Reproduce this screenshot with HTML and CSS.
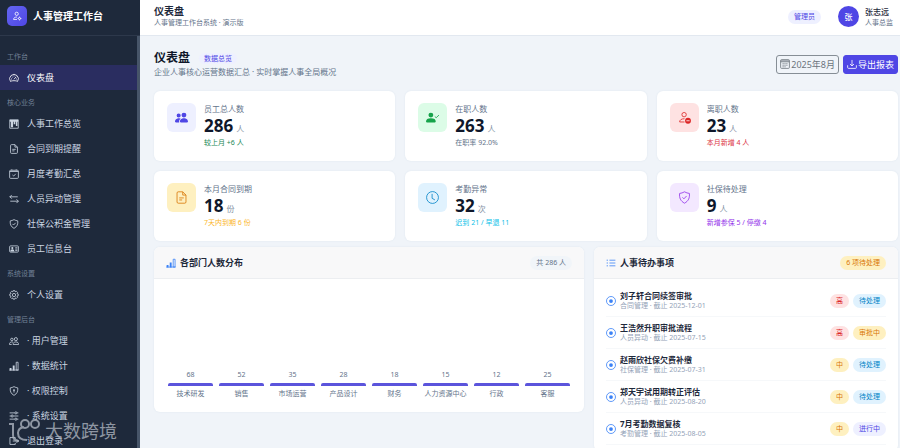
FILE: index.html
```html
<!DOCTYPE html>
<html lang="zh-CN">
<head>
<meta charset="utf-8">
<meta name="viewport" content="width=device-width, initial-scale=1">
<title>人事管理工作台</title>
<link rel="stylesheet" href="styles.css">
</head>
<body>
<svg class="sprite" aria-hidden="true">
  <symbol id="person-gear" viewBox="0 0 16 16"><circle cx="7.5" cy="4.5" r="2.6"/><path d="M8 9.600c-3.800 0-5.500 1.600-5.500 3.900h5.500"/><circle cx="12" cy="12" r="1.700"/><path d="M12 9v1.300M12 13.700V15M9 12h1.300M13.700 12H15"/></symbol>
  <symbol id="gauge" viewBox="0 0 16 16"><path d="M2.400 13.500a7 7 0 1 1 11.200 0c-1-.7-3-1.200-5.600-1.200s-4.600.5-5.600 1.200z"/><path d="M8 10l3.500-4M8 4v1.500M3.300 9.500h1.500M4.600 6l1 .8M11.500 9.500h1.300"/></symbol>
  <symbol id="board" viewBox="0 0 16 16"><path d="M1.200 1.200h13.600v13.600H1.200z"/><path class="solid" d="M1.500 1.500h13v3h-13zM3 4h3.500v9H3zM7.500 4h2.500v4.500H7.500zM11 4h2.500v7H11z"/></symbol>
  <symbol id="doc" viewBox="0 0 16 16"><path d="M9.500 1H4a1.500 1.500 0 0 0-1.500 1.500v11A1.500 1.500 0 0 0 4 15h8a1.500 1.500 0 0 0 1.500-1.500V5zM9.500 1v4h4M5.200 8.500h5.600M5.200 11h3.600"/></symbol>
  <symbol id="cal-check" viewBox="0 0 16 16"><rect x="1" y="2" width="14" height="13" rx="1.500"/><path d="M1 4h14M4.500.5V2M11.500.5V2M5.500 9.500l2 1.800 3.300-3.600"/></symbol>
  <symbol id="swap" viewBox="0 0 16 16"><path d="M15 11.500H2M12 8.500l3 3-3 3M1 4.500h13M4.500 1.500l-3 3 3 3"/></symbol>
  <symbol id="shield-check" viewBox="0 0 16 16"><path d="M8 1C6 2.200 4 2.700 2 3c-.6 5.300 1 9.300 6 12 5-2.700 6.600-6.700 6-12-2-.3-4-.8-6-2z"/><path d="M5.500 7.800l1.800 1.800 3.300-3.500"/></symbol>
  <symbol id="id-card" viewBox="0 0 16 16"><rect x="1" y="3" width="14" height="10" rx="1.500"/><circle class="solid" cx="5.300" cy="6.500" r="1.700"/><path class="solid" d="M2 12q0-3.500 3.300-3.500T8.600 12z"/><path d="M10 6h3.500M10 8.200h3.500M10 10.500h3.500"/></symbol>
  <symbol id="gear" viewBox="0 0 16 16"><path d="M6.600 1h2.800l.5 1.900 1.800-1 2 2-1 1.800 2 .6v2.900l-2 .6 1 1.800-2 2-1.800-1-.5 2H6.600l-.5-2-1.800 1-2-2 1-1.800-2-.6V6.300l2-.6-1-1.800 2-2 1.800 1z"/><circle cx="8" cy="8" r="2.600"/></symbol>
  <symbol id="people" viewBox="0 0 16 16"><circle cx="11" cy="5" r="2.500"/><path d="M6.500 13.500c0-2.400 1.500-4 4.500-4s4.500 1.600 4.500 4zM6.500 9.800C2.500 8.700.6 10.800.6 13.500h3.700"/><circle cx="4.600" cy="5.500" r="2"/></symbol>
  <symbol id="people-fill" viewBox="0 0 16 16"><path class="solid" d="M7 14s-1 0-1-1 1-4 5-4 5 3 5 4-1 1-1 1zm4-6a3 3 0 1 0 0-6 3 3 0 0 0 0 6m-5.784 6A2.240 2.240 0 0 1 5 13c0-1.355.68-2.750 1.936-3.720A6.300 6.300 0 0 0 5 9c-4 0-5 3-5 4s1 1 1 1zM4.500 8a2.500 2.500 0 1 0 0-5 2.500 2.500 0 0 0 0 5"/></symbol>
  <symbol id="bars" viewBox="0 0 16 16"><path class="solid" d="M1 11h3v4H1zM6 7h3v8H6z"/><path d="M11.500 2h3v12.500h-3zM.5 14.500h15"/></symbol>
  <symbol id="shield-lock" viewBox="0 0 16 16"><path d="M8 1C6 2.200 4 2.700 2 3c-.6 5.300 1 9.300 6 12 5-2.700 6.600-6.700 6-12-2-.3-4-.8-6-2z"/><circle class="solid" cx="8" cy="6.500" r="1.500"/><path d="M8 7v3.500"/></symbol>
  <symbol id="sliders" viewBox="0 0 16 16"><path d="M1 3h8M13 3h2M1 8h2M7 8h8M1 13h8M13 13h2"/><circle cx="11" cy="3" r="1.700"/><circle cx="5" cy="8" r="1.700"/><circle cx="11" cy="13" r="1.700"/></symbol>
  <symbol id="exit" viewBox="0 0 16 16"><path d="M10 5V2.500H1.500v11H10V11M6 8h9M12 5l3 3-3 3"/></symbol>
  <symbol id="person-check" viewBox="0 0 16 16"><circle class="solid" cx="6" cy="5" r="3"/><path class="solid" d="M0 13c0-2.500 2-4 6-4s6 1.500 6 4q0 1-1 1H1q-1 0-1-1z"/><path d="M10.800 6.700l1.700 1.600L16 5"/></symbol>
  <symbol id="person-minus" viewBox="0 0 16 16"><circle cx="7.500" cy="4.500" r="2.700"/><path d="M8 9.500c-4 0-6 1.700-6 4h6"/><circle class="solid" cx="12.300" cy="12" r="3.600"/><path class="cut" d="M10.300 12h4"/></symbol>
  <symbol id="clock" viewBox="0 0 16 16"><circle cx="8" cy="8" r="7.300"/><path d="M7.500 3.500V9l3.500 2"/></symbol>
  <symbol id="calendar" viewBox="0 0 16 16"><rect x="1" y="1" width="14" height="14" rx="1.500"/><path d="M1 4.500h14M1 3h14M4 7.500h2M7 7.500h2M10 7.500h2M4 10h2M7 10h2M10 10h2M4 12.500h2M7 12.500h2"/></symbol>
  <symbol id="download" viewBox="0 0 16 16"><path d="M1 10v3.500Q1 15 2.500 15h11q1.500 0 1.500-1.500V10M8 1.500V11M4.800 8L8 11.200 11.200 8"/></symbol>
  <symbol id="list" viewBox="0 0 16 16"><path d="M5.500 3.500H15M5.500 8H15M5.500 12.500H15M1 3.500h2.200M1 8h2.200M1 12.500h2.200"/></symbol>
  <symbol id="record" viewBox="0 0 16 16"><circle cx="8" cy="8" r="7.200"/><circle class="solid" cx="8" cy="8" r="3"/></symbol>
</svg>
<div class="app">
  <aside class="sidebar">
    <div class="brand">
      <span class="logo"><svg class="icon"><use href="#person-gear"/></svg></span>
      <span>人事管理工作台</span>
    </div>
    <nav class="nav" aria-label="主导航">
      <p class="nav-label">工作台</p>
      <a class="nav-item active" href="#"><svg class="icon"><use href="#gauge"/></svg>仪表盘</a>
      <p class="nav-label">核心业务</p>
      <a class="nav-item" href="#"><svg class="icon"><use href="#board"/></svg>人事工作总览</a>
      <a class="nav-item" href="#"><svg class="icon"><use href="#doc"/></svg>合同到期提醒</a>
      <a class="nav-item" href="#"><svg class="icon"><use href="#cal-check"/></svg>月度考勤汇总</a>
      <a class="nav-item" href="#"><svg class="icon"><use href="#swap"/></svg>人员异动管理</a>
      <a class="nav-item" href="#"><svg class="icon"><use href="#shield-check"/></svg>社保公积金管理</a>
      <a class="nav-item" href="#"><svg class="icon"><use href="#id-card"/></svg>员工信息台</a>
      <p class="nav-label">系统设置</p>
      <a class="nav-item" href="#"><svg class="icon"><use href="#gear"/></svg>个人设置</a>
      <p class="nav-label">管理后台</p>
      <a class="nav-item" href="#"><svg class="icon"><use href="#people"/></svg>· 用户管理</a>
      <a class="nav-item" href="#"><svg class="icon"><use href="#bars"/></svg>· 数据统计</a>
      <a class="nav-item" href="#"><svg class="icon"><use href="#shield-lock"/></svg>· 权限控制</a>
      <a class="nav-item" href="#"><svg class="icon"><use href="#sliders"/></svg>· 系统设置</a>
      <a class="nav-item" href="#"><svg class="icon"><use href="#exit"/></svg>退出登录</a>
    </nav>
  </aside>
  <div class="page">
    <header class="topbar">
      <div>
        <div class="topbar-title">仪表盘</div>
        <div class="topbar-sub">人事管理工作台系统 · 演示版</div>
      </div>
      <div class="account">
        <span class="badge indigo">管理员</span>
        <div class="user">
          <span class="avatar">张</span>
          <div>
            <div class="user-name">张志远</div>
            <div class="user-role">人事总监</div>
          </div>
        </div>
      </div>
    </header>
    <main class="content">
      <div class="page-head">
        <div>
          <div class="heading"><h1>仪表盘</h1><span class="badge small indigo">数据总览</span></div>
          <p class="lead">企业人事核心运营数据汇总 · 实时掌握人事全局概况</p>
        </div>
        <div class="actions">
          <button class="btn" type="button"><svg class="icon"><use href="#calendar"/></svg>2025年8月</button>
          <button class="btn primary" type="button"><svg class="icon"><use href="#download"/></svg>导出报表</button>
        </div>
      </div>
      <section class="stats">
        <article class="card stat">
          <span class="stat-icon indigo"><svg class="icon"><use href="#people-fill"/></svg></span>
          <div><div class="stat-label">员工总人数</div><div class="stat-value">286<small>人</small></div><div class="stat-note up">较上月 +6 人</div></div>
        </article>
        <article class="card stat">
          <span class="stat-icon green"><svg class="icon"><use href="#person-check"/></svg></span>
          <div><div class="stat-label">在职人数</div><div class="stat-value">263<small>人</small></div><div class="stat-note">在职率 92.0%</div></div>
        </article>
        <article class="card stat">
          <span class="stat-icon red"><svg class="icon"><use href="#person-minus"/></svg></span>
          <div><div class="stat-label">离职人数</div><div class="stat-value">23<small>人</small></div><div class="stat-note down">本月新增 4 人</div></div>
        </article>
        <article class="card stat">
          <span class="stat-icon amber"><svg class="icon"><use href="#doc"/></svg></span>
          <div><div class="stat-label">本月合同到期</div><div class="stat-value">18<small>份</small></div><div class="stat-note warn">7天内到期 6 份</div></div>
        </article>
        <article class="card stat">
          <span class="stat-icon sky"><svg class="icon"><use href="#clock"/></svg></span>
          <div><div class="stat-label">考勤异常</div><div class="stat-value">32<small>次</small></div><div class="stat-note info">迟到 21 / 早退 11</div></div>
        </article>
        <article class="card stat">
          <span class="stat-icon purple"><svg class="icon"><use href="#shield-check"/></svg></span>
          <div><div class="stat-label">社保待处理</div><div class="stat-value">9<small>人</small></div><div class="stat-note violet">新增参保 5 / 停缴 4</div></div>
        </article>
      </section>
      <div class="panels">
        <section class="card">
          <div class="panel-head"><h2><svg class="icon"><use href="#bars"/></svg>各部门人数分布</h2><span class="badge plain">共 286 人</span></div>
          <div class="chart">
            <div class="column"><span>68</span><i></i><b>技术研发</b></div>
            <div class="column"><span>52</span><i></i><b>销售</b></div>
            <div class="column"><span>35</span><i></i><b>市场运营</b></div>
            <div class="column"><span>28</span><i></i><b>产品设计</b></div>
            <div class="column"><span>18</span><i></i><b>财务</b></div>
            <div class="column"><span>15</span><i></i><b>人力资源中心</b></div>
            <div class="column"><span>12</span><i></i><b>行政</b></div>
            <div class="column"><span>25</span><i></i><b>客服</b></div>
          </div>
        </section>
        <section class="card">
          <div class="panel-head"><h2><svg class="icon"><use href="#list"/></svg>人事待办事项</h2><span class="badge amber">6 项待处理</span></div>
          <ul class="tasks">
            <li><svg class="icon"><use href="#record"/></svg><div class="task"><div class="task-title">刘子轩合同续签审批</div><div class="task-meta">合同管理 · 截止 2025-12-01</div></div><span class="badge red">高</span><span class="badge sky">待处理</span></li>
            <li><svg class="icon"><use href="#record"/></svg><div class="task"><div class="task-title">王浩然升职审批流程</div><div class="task-meta">人员异动 · 截止 2025-07-15</div></div><span class="badge red">高</span><span class="badge amber">审批中</span></li>
            <li><svg class="icon"><use href="#record"/></svg><div class="task"><div class="task-title">赵雨欣社保欠费补缴</div><div class="task-meta">社保管理 · 截止 2025-07-31</div></div><span class="badge amber">中</span><span class="badge sky">待处理</span></li>
            <li><svg class="icon"><use href="#record"/></svg><div class="task"><div class="task-title">郑天宇试用期转正评估</div><div class="task-meta">人员异动 · 截止 2025-08-20</div></div><span class="badge amber">中</span><span class="badge sky">待处理</span></li>
            <li><svg class="icon"><use href="#record"/></svg><div class="task"><div class="task-title">7月考勤数据复核</div><div class="task-meta">考勤管理 · 截止 2025-08-05</div></div><span class="badge amber">中</span><span class="badge indigo">进行中</span></li>
          </ul>
        </section>
      </div>
    </main>
  </div>
  <div class="watermark">
    <svg viewBox="0 0 34 26" aria-hidden="true"><path d="M1 6h4v11q0 6 6 6M16 9q-6 1-6 6 0 7 9 7"/><circle cx="17" cy="6" r="4"/><circle cx="27" cy="6" r="4"/></svg>
    <span>大数跨境</span>
  </div>
</div>
</body>
</html>
```

FILE: styles.css
```css
* { box-sizing: border-box; }

body {
  margin: 0;
  font-family: "Noto Sans", "Noto Sans CJK SC", sans-serif;
  font-size: 8px;
  line-height: 12px;
  color: #1e293b;
  background: #f0f4f9;
}

h1, h2, p, ul { margin: 0; padding: 0; }
ul { list-style: none; }
a { color: inherit; text-decoration: none; }

.sprite { position: absolute; width: 0; height: 0; }

.icon {
  flex: none;
  width: 10px;
  height: 10px;
  fill: none;
  stroke: currentColor;
  stroke-width: 1.3;
}
.solid { fill: currentColor; stroke: none; }
.cut { stroke: #fff; }

.app {
  position: relative;
  display: flex;
  height: 100vh;
  overflow: hidden;
}

/* Sidebar */
.sidebar {
  flex: none;
  display: flex;
  flex-direction: column;
  width: 140px;
  background: #1e293b;
  color: #cbd5e1;
  overflow: hidden;
}
.brand {
  flex: none;
  display: flex;
  align-items: center;
  gap: 6px;
  height: 36px;
  padding: 0 7px 3px;
  border-bottom: 1px solid #2d384b;
  color: #fff;
  font-size: 10px;
  font-weight: 700;
}
.logo {
  display: grid;
  place-items: center;
  width: 20px;
  height: 20px;
  border-radius: 5px;
  background: linear-gradient(135deg, #6366f1, #4f46e5);
}
.nav {
  flex: 1;
  min-height: 0;
  padding-top: 8px;
  border-right: 3px solid #475569;
  overflow: hidden;
}
.nav-label {
  height: 21px;
  padding: 7px 7px 0;
  color: #718096;
  font-size: 7px;
}
.nav-item {
  display: flex;
  align-items: center;
  gap: 8px;
  height: 25px;
  padding: 0 9px;
  font-size: 9px;
}
.nav-item.active { background: #2a2d60; color: #fff; }

/* Top bar */
.page {
  flex: 1;
  min-width: 0;
  display: flex;
  flex-direction: column;
}
.topbar {
  flex: none;
  display: flex;
  align-items: center;
  justify-content: space-between;
  height: 36px;
  padding: 0 7px 2px 14px;
  border-bottom: 1px solid #e2e8f0;
  background: #fff;
}
.topbar-title { font-size: 10px; font-weight: 700; }
.topbar-sub, .user-role { color: #64748b; font-size: 7px; line-height: 11px; }
.account { display: flex; align-items: center; gap: 17px; }
.user { display: flex; align-items: center; gap: 6px; }
.user-name { font-weight: 500; line-height: 11px; }
.avatar {
  display: grid;
  place-items: center;
  width: 21px;
  height: 21px;
  border-radius: 50%;
  background: #4f46e5;
  color: #fff;
  font-weight: 500;
}

.badge {
  flex: none;
  padding: 1px 6px;
  border-radius: 8px;
  font-size: 7px;
}
.badge.small { padding: 0 5px; line-height: 11px; }
.badge.plain { background: #f1f5f9; color: #64748b; }
.indigo { background: #eef0ff; color: #4f46e5; }
.green { background: #dcfce7; color: #16a34a; }
.red { background: #fee2e2; color: #dc2626; }
.amber { background: #fef0c0; color: #d97706; }
.sky { background: #e0f2fe; color: #0284c7; }
.purple { background: #f3e8ff; color: #9333ea; }

/* Page heading */
.content { flex: 1; min-height: 0; padding: 14px 2px 0 14px; overflow: hidden; }
.page-head {
  display: flex;
  align-items: center;
  justify-content: space-between;
  margin-bottom: 13px;
}
.heading { display: flex; align-items: center; gap: 9px; }
h1 { font-size: 12px; line-height: 16px; font-weight: 700; color: #0f172a; }
.lead { color: #64748b; }
.actions { display: flex; gap: 4px; }
.btn {
  display: flex;
  align-items: center;
  gap: 1px;
  height: 19px;
  padding: 0 3px;
  border: 1px solid #868e96;
  border-radius: 3px;
  background: transparent;
  color: #6c757d;
  font-family: inherit;
  font-size: 9px;
}
.btn.primary { border-color: #4f46e5; background: #4f46e5; color: #fff; }

/* Cards */
.card {
  border-radius: 6px;
  background: #fff;
  box-shadow: 0 0 2px #dde5ee;
  overflow: hidden;
}
.stats {
  display: grid;
  grid-template-columns: repeat(3, 1fr);
  gap: 10px;
}
.stat { display: flex; gap: 8px; padding: 12px 13px; }
.stat-icon {
  display: grid;
  place-items: center;
  width: 29px;
  height: 29px;
  border-radius: 6px;
}
.stat-icon .icon { width: 13px; height: 13px; stroke-width: 1; }
.stat-label { color: #64748b; }
.stat-value {
  display: flex;
  align-items: baseline;
  gap: 3px;
  height: 22px;
  font-size: 17px;
  font-weight: 700;
  line-height: 22px;
  color: #0f172a;
}
.stat-value small {
  color: #8491a5;
  font-size: 8px;
  font-weight: 400;
  line-height: 12px;
}
.stat-note { color: #64748b; font-size: 7px; }
.up { color: #198754; }
.down { color: #dc3545; }
.warn { color: #fbb62b; }
.info { color: #0dbfe8; }
.violet { color: #9333ea; }

/* Panels */
.panels {
  display: grid;
  grid-template-columns: 430fr 304fr;
  align-items: start;
  gap: 10px;
  margin-top: 6px;
}
.panel-head {
  display: flex;
  align-items: center;
  justify-content: space-between;
  height: 32px;
  padding: 0 12px;
  border-bottom: 1px solid #eceef1;
  background: #f8f8f9;
}
h2 { display: flex; align-items: center; gap: 4px; font-size: 9px; font-weight: 700; }
h2 .icon { color: #3b82f6; }

.chart {
  display: flex;
  align-items: flex-end;
  gap: 6px;
  height: 133px;
  padding: 0 14px 12px;
}
.column {
  flex: 1;
  display: flex;
  flex-direction: column;
  align-items: center;
  gap: 2px;
  min-width: 0;
  color: #64748b;
  font-size: 7px;
  white-space: nowrap;
}
.column i {
  width: 100%;
  height: 3px;
  border-radius: 2px 2px 0 0;
  background: #5b54dc;
}
.column b { font-weight: 400; }

.tasks { padding: 6px 12px; }
.tasks li {
  display: flex;
  align-items: center;
  gap: 4px;
  height: 32px;
  border-bottom: 1px solid #f6f8fa;
}
.tasks .icon { color: #3b82f6; }
.task { flex: 1; }
.task-title { font-weight: 700; line-height: 11px; }
.task-meta { color: #94a3b8; font-size: 7px; line-height: 10px; }

/* Brand mark laid over the foot of the sidebar */
.watermark {
  position: absolute;
  left: 8px;
  bottom: 3px;
  display: flex;
  align-items: center;
  gap: 3px;
  color: #aab2bd;
  font-size: 18px;
  line-height: 28px;
  opacity: 0.8;
  pointer-events: none;
}
.watermark svg {
  width: 34px;
  height: 26px;
  fill: none;
  stroke: currentColor;
  stroke-width: 2;
}
```
